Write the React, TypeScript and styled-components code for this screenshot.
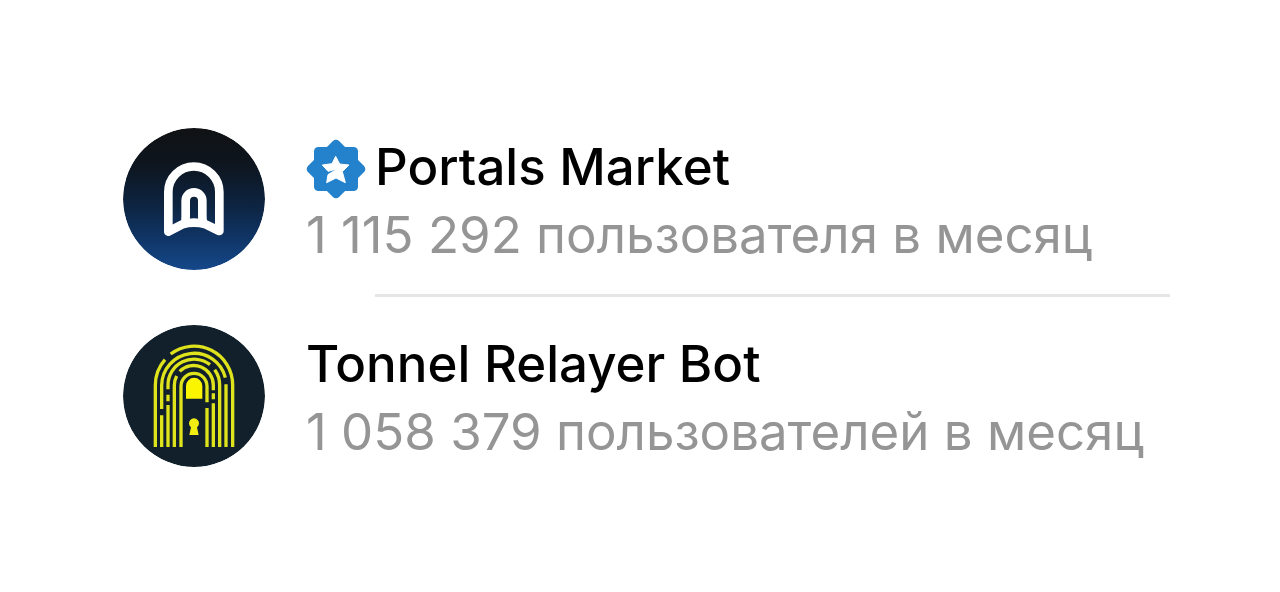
import React from "react";
import styled, { createGlobalStyle } from "styled-components";

const GlobalStyle = createGlobalStyle`
  * { box-sizing: border-box; }
  body {
    margin: 0;
    background: #fff;
    font-family: Inter, "Liberation Sans", sans-serif;
  }
`;

const Page = styled.main`
  padding: 128px 110px 124px 123px;
`;

const BotList = styled.ul`
  list-style: none;
  margin: 0;
  padding: 0;
`;

const BotRow = styled.li`
  display: flex;
  align-items: center;
  gap: 41px;
`;

const Divider = styled.li`
  height: 3px;
  margin: 24px 0 28px 252px;
  background: #e6e6e6;
`;

const AvatarSvg = styled.svg`
  flex: none;
  width: 142px;
  height: 142px;
  border-radius: 50%;
`;

const Info = styled.div`
  min-width: 0;
  padding-top: 4px;
`;

const Title = styled.h2`
  display: flex;
  align-items: center;
  gap: 9px;
  margin: 0;
  font-size: 51px;
  line-height: 68px;
  font-weight: 500;
  color: #000;
  white-space: nowrap;
`;

const BadgeSvg = styled.svg`
  flex: none;
  width: 60px;
  height: 60px;
  margin-top: 4px;
`;

const Subtitle = styled.p`
  margin: 0;
  font-size: 51px;
  line-height: 68px;
  font-weight: 400;
  color: #959595;
  white-space: nowrap;
`;

const PortalsAvatar = () => (
  <AvatarSvg viewBox="27 26 426 426" role="img" aria-label="Portals Market">
    <defs>
      <linearGradient id="portalsNight" x1="0" y1="0" x2="0" y2="1">
        <stop offset="0" stopColor="#101214" />
        <stop offset="0.25" stopColor="#0e151e" />
        <stop offset="0.55" stopColor="#0d2442" />
        <stop offset="0.8" stopColor="#10376a" />
        <stop offset="1" stopColor="#15488a" />
      </linearGradient>
    </defs>
    <circle cx="240" cy="239" r="213" fill="url(#portalsNight)" />
    <g fill="none" stroke="#fff" strokeWidth="26" strokeLinejoin="round" strokeLinecap="round">
      <path d="M163 337V218a76 76 0 0 1 153 0V335L275 315Q240 305 205 315Z" />
      <path d="M214 308Q215 302 215 290V244a25 25 0 0 1 50 0V290Q265 302 267 308" />
    </g>
  </AvatarSvg>
);

const TonnelAvatar = () => (
  <AvatarSvg viewBox="27 27 426 426" role="img" aria-label="Tonnel Relayer Bot">
    <circle cx="240" cy="240" r="213" fill="#11202a" />
    <g fill="none" stroke="#dfe31c" strokeWidth="10">
      <path d="M124 393V208A116 116 0 0 1 153 131" />
      <path d="M170 114A116 116 0 0 1 356 208V393" />
      <path d="M143 393V298M143 279V208A97 97 0 0 1 334 185M336 205V393" />
      <path d="M162 393V267M162 256V236M162 220V208A78 78 0 0 1 288 146M302 161A78 78 0 0 1 317 208V393" />
      <path d="M181 393V208A59 59 0 0 1 188 180M197 166A59 59 0 0 1 298 208V223M298 232V250M298 262V393" />
      <path d="M201 393V211A39 39 0 0 1 279 211V259M279 276V393" />
    </g>
    <path d="M216 248V210a24 24 0 0 1 49 0V248Z" fill="#fbf500" />
    <path d="M226 357L231 334A15 15 0 1 1 249 334L254 357Z" fill="#f3ee12" />
  </AvatarSvg>
);

const VerifiedBadge = () => (
  <BadgeSvg viewBox="29 29 180 180" role="img" aria-label="Verified">
    <g fill="#2481cc">
      <rect x="53" y="53" width="132" height="132" rx="13" />
      <rect x="53" y="53" width="132" height="132" rx="13" transform="rotate(45 119 119)" />
    </g>
    <path
      d="M118 81L130 104L158 107L138 127L147 160L119 146L91 160L95 136Q108 125 125 121Q108 121 95 126L78 107L107 103Z"
      fill="#fff"
      stroke="#fff"
      strokeWidth="3"
      strokeLinejoin="round"
    />
  </BadgeSvg>
);

export default function App() {
  return (
    <>
      <GlobalStyle />
      <Page>
        <BotList>
          <BotRow>
            <PortalsAvatar />
            <Info>
              <Title>
                <VerifiedBadge />
                Portals Market
              </Title>
              <Subtitle>1 115 292 пользователя в месяц</Subtitle>
            </Info>
          </BotRow>
          <Divider role="separator" />
          <BotRow>
            <TonnelAvatar />
            <Info>
              <Title>Tonnel Relayer Bot</Title>
              <Subtitle>1 058 379 пользователей в месяц</Subtitle>
            </Info>
          </BotRow>
        </BotList>
      </Page>
    </>
  );
}
